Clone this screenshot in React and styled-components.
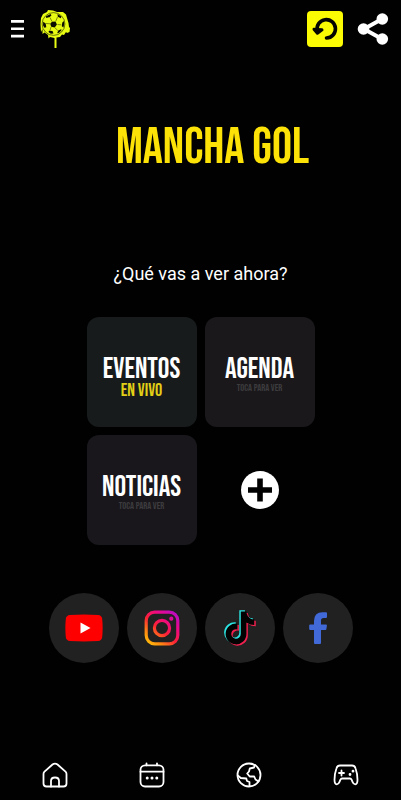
import React from "react";
import styled, { createGlobalStyle } from "styled-components";

const GlobalStyle = createGlobalStyle`
  *, *::before, *::after { box-sizing: border-box; }
  html { height: 100%; }
  body { margin: 0; min-height: 100%; background: #010102; color: #fff; font-family: Roboto, sans-serif; }
  button { padding: 0; border: 0; background: none; color: inherit; font: inherit; cursor: pointer; }
  a { color: inherit; text-decoration: none; }
  svg { display: block; }
`;

const Page = styled.div`
  min-height: 100vh;
  display: flex;
  flex-direction: column;
`;

const Header = styled.header`
  display: flex;
  align-items: center;
  justify-content: space-between;
  height: 58px;
  padding: 0 12px 0 8px;
`;

const HeaderGroup = styled.div`
  display: flex;
  align-items: center;
  gap: ${(p) => p.$gap}px;
`;

const IconButton = styled.button`
  display: grid;
  place-items: center;
`;

const BackButton = styled(IconButton)`
  width: 36px;
  height: 36px;
  border-radius: 4px;
  background: #fbfb03;
  color: #050500;
`;

const Main = styled.main`
  flex: 1;
  display: flex;
  flex-direction: column;
  align-items: center;
`;

const condensed = `
  font-family: "Bebas Neue", "Liberation Sans Narrow", "Roboto Condensed", Roboto, sans-serif;
  font-weight: 400;
`;

const Title = styled.h1`
  ${condensed}
  margin: 66px 0 0;
  padding-left: 24px;
  font-size: 50px;
  line-height: 48px;
  color: #fde208;
  white-space: nowrap;
`;

const Question = styled.p`
  margin: 90px 0 0;
  font-size: 18px;
  line-height: 24px;
`;

const Cards = styled.div`
  display: grid;
  grid-template-columns: repeat(2, 110px);
  grid-auto-rows: 110px;
  gap: 8px;
  margin-top: 31px;
`;

const Card = styled.button`
  ${condensed}
  display: flex;
  flex-direction: column;
  align-items: center;
  padding-top: 40px;
  border-radius: 12px;
  background: ${(p) => p.$background};
`;

const CardName = styled.span`
  font-size: 29px;
  line-height: 26px;
`;

const CardNote = styled.span`
  font-size: ${(p) => (p.$live ? 18 : 10)}px;
  line-height: ${(p) => (p.$live ? 16 : 10)}px;
  color: ${(p) => (p.$live ? "#e2cf16" : "#3d3c3f")};
`;

const Socials = styled.nav`
  display: flex;
  gap: 8px;
  margin-top: 48px;
`;

const SocialLink = styled.a`
  display: grid;
  place-items: center;
  width: 70px;
  height: 70px;
  border-radius: 50%;
  background: #212121;
`;

const TabBar = styled.nav`
  display: grid;
  grid-template-columns: repeat(4, 1fr);
  height: 50px;
  padding: 0 6px;
`;

const Tab = styled.a`
  display: grid;
  place-items: center;
`;

const MenuIcon = () => (
  <svg width="18" height="20" viewBox="0 0 18 20" fill="#fff" aria-hidden="true">
    <path d="M3 1h13v2.700H3zM3 8.400h13v2.700H3zM3 15.700h13v2.700H3z" />
  </svg>
);

const BallLogo = () => (
  <svg width="34" height="40" viewBox="0 0 34 40" aria-hidden="true">
    <path
      fill="#e8fb12"
      d="M3 9 5 5 9 3 10 1 15 1.500 19 3 25 3 28 5.500 29 9 30.500 14 31 18 32 19 31.500 23 29 24 28 23 26 26 24 25.500 22 28 18.500 28.500V39h-2V29L12 28l-1.500 1.500L10 26 6.500 23.500 4.500 25V20L3 23 2.500 15z"
    />
    <circle cx="15.500" cy="15" r="11.400" fill="none" stroke="#161a02" strokeWidth=".6" />
    <g fill="#0b0d02">
      <path d="m14 12.800 3.500-.2 1.400 3-2.200 2.900-3.500-.7-1-3z" />
      <path d="m8 7.300 4.500-2.300 1 1.300-1.700 1.700-3.600 1zM19.500 5l3.800 2.600-.4 1.600-3.100-1.500zM5.200 12.800l2.500 1.700.6 3.700-1.900.6-1.400-2.500zM25.700 12l.6 3-.9 3.500-1.600-1.300.4-3.500zM11 21.800l3.500.3 1 2.500-2.700.2-2.300-1.700zM20.300 21.500l2.800-1.200.5.8-2.500 2.600-2 .6z" />
    </g>
    <path
      fill="none"
      stroke="#3c4204"
      strokeWidth=".6"
      d="m12 8.500 2 4M19.500 8l-1.700 4.200M19.500 15.500l3.800.3M17 18.800l2.800 2.700M13 18l-1 3.500M8 14.500l4 .3"
    />
  </svg>
);

const BackIcon = () => (
  <svg width="28" height="28" viewBox="0 0 28 28" fill="none" stroke="currentColor" aria-hidden="true">
    <path d="M6.200 15.500A9.200 9.200 0 1 1 15.500 23" strokeWidth="3.600" strokeLinecap="round" />
    <path d="m3 14.200 3.400 4L11 14.800z" fill="currentColor" strokeWidth="3" strokeLinejoin="round" />
  </svg>
);

const ShareIcon = () => (
  <svg width="32" height="32" viewBox="0 0 32 32" fill="#fff" aria-hidden="true">
    <path d="M25 6 7 16l18 10" fill="none" stroke="#fff" strokeWidth="4" />
    <circle cx="25.300" cy="6" r="5.800" />
    <circle cx="6.500" cy="16" r="5.800" />
    <circle cx="25.300" cy="26" r="5.800" />
  </svg>
);

const PlusIcon = () => (
  <svg width="38" height="38" viewBox="0 0 38 38" aria-hidden="true">
    <circle cx="19" cy="19" r="19" fill="#fff" />
    <path d="M16.200 7.500h5.600v8.700H31v5.600h-9.200v8.700h-5.600v-8.700H7v-5.600h9.200z" fill="#010102" />
  </svg>
);

const YoutubeIcon = () => (
  <svg width="38" height="28" viewBox="0 0 38 28" aria-hidden="true">
    <path d="M5 1Q19 .2 33 1q3.800.3 4.200 4 .9 9 0 18-.4 3.700-4.200 4-14 .8-28 0-3.800-.3-4.200-4-.9-9 0-18Q1.200 1.300 5 1z" fill="#fe0000" />
    <path d="m15.500 8.500 10 5.500-10 5.500z" fill="#fff" />
  </svg>
);

const InstagramIcon = () => (
  <svg width="36" height="36" viewBox="0 0 36 36" fill="none" aria-hidden="true">
    <defs>
      <linearGradient id="instagram" x1="3" y1="35" x2="31" y2="2" gradientUnits="userSpaceOnUse">
        <stop offset="0" stopColor="#ffc80a" />
        <stop offset=".22" stopColor="#ff8a12" />
        <stop offset=".48" stopColor="#fb2036" />
        <stop offset=".74" stopColor="#ee0889" />
        <stop offset="1" stopColor="#b80cc4" />
      </linearGradient>
    </defs>
    <rect x="2.200" y="2.200" width="31.600" height="31.600" rx="8.500" stroke="url(#instagram)" strokeWidth="3.200" />
    <circle cx="18" cy="18" r="7.600" stroke="url(#instagram)" strokeWidth="3.200" />
    <circle cx="27.300" cy="8.700" r="2.100" fill="url(#instagram)" />
  </svg>
);

const notePath =
  "M448 210a210 210 0 0 1-122.800-39.300v178.700A162.600 162.600 0 1 1 185 188.300v89.900a74.600 74.600 0 1 0 52.200 71.200V0h88a121 121 0 0 0 1.900 22.200A122 122 0 0 0 381 102.400a121 121 0 0 0 67 20.100z";

const TiktokIcon = () => (
  <svg width="32" height="36" viewBox="-25 -25 500 562" aria-hidden="true">
    <path d={notePath} fill="#f0204f" transform="translate(23 20)" />
    <path d={notePath} fill="#2ce5e2" transform="translate(-23 -20)" />
    <path d={notePath} fill="#030303" />
  </svg>
);

const FacebookIcon = () => (
  <svg width="18" height="32" viewBox="0 0 18 32" aria-hidden="true">
    <path
      d="M6 32q-1 0-1-1V18H1.200q-1 0-1-1v-3.500q0-1 1-1H5V9Q5 .5 13.500.3H17q1 0 1 1V5q0 1-1 1h-2.500Q12 6 12 8.500v4h5q1 0 .9 1L17.400 17q-.1 1-1 1H12v13q0 1-1 1z"
      fill="#4169d8"
    />
  </svg>
);

const LineIcon = ({ children }) => (
  <svg width="26" height="26" viewBox="0 0 26 26" fill="none" stroke="#fff" strokeWidth="1.800" strokeLinecap="round" strokeLinejoin="round" aria-hidden="true">
    {children}
  </svg>
);

const HomeIcon = () => (
  <LineIcon>
    <path d="M1.500 12Q1.500 10.500 2.500 9.600L10.500 2.500Q13 .6 15.500 2.500l8 7.100q1 .9 1 2.400v9.500q0 3-3 3h-17q-3 0-3-3z" />
    <path d="M9 24.500V19q0-3.500 4-3.500t4 3.500v5.500" />
  </LineIcon>
);

const CalendarIcon = () => (
  <LineIcon>
    <rect x="1.500" y="3.300" width="23" height="21.200" rx="4.500" />
    <path d="M1.500 9.700h23M7.500 1.300v2M18 1.300v2" />
    <path d="M8.200 16h.01M13 16h.01M17.800 16h.01" strokeWidth="3" />
  </LineIcon>
);

const GlobeIcon = () => (
  <LineIcon>
    <circle cx="13" cy="13" r="11.500" />
    <path d="m18.800 3.200-.8 2.300-4.200 1-.8 3-1.800 2 2.500 3h4.500l1.300 3 3 2M1.800 13.500l3 2.500 5.500.5.700 2.500 2.500 1v4" />
  </LineIcon>
);

const GamepadIcon = () => (
  <LineIcon>
    <path d="M7 3.500h12q2.600 0 3.500 2.700 2 5.500 2 11.500 0 4.400-2.300 4.600-1.700 0-2.700-2.400l-.8-2Q18 16.500 17 16.500H9q-1 0-1.700 1.400l-.8 2q-1 2.400-2.700 2.400-2.300-.2-2.300-4.600 0-6 2-11.500Q4.400 3.500 7 3.500z" />
    <path d="M8.500 8.500v5M6 11h5" />
    <path d="M20 9.200h.01M17 12.500h.01" strokeWidth="2.800" />
  </LineIcon>
);

const socials = [
  ["YouTube", YoutubeIcon],
  ["Instagram", InstagramIcon],
  ["TikTok", TiktokIcon],
  ["Facebook", FacebookIcon],
];

const tabs = [
  ["Inicio", HomeIcon],
  ["Calendario", CalendarIcon],
  ["Mundo", GlobeIcon],
  ["Juegos", GamepadIcon],
];

const cards = [
  { name: "EVENTOS", note: "EN VIVO", live: true, background: "#171b1b" },
  { name: "AGENDA", note: "TOCA PARA VER", background: "#1a181a" },
  { name: "NOTICIAS", note: "TOCA PARA VER", background: "#19171b" },
];

export default function App() {
  return (
    <Page>
      <GlobalStyle />
      <Header>
        <HeaderGroup $gap={12}>
          <IconButton aria-label="Menú"><MenuIcon /></IconButton>
          <BallLogo />
        </HeaderGroup>
        <HeaderGroup $gap={14}>
          <BackButton aria-label="Volver"><BackIcon /></BackButton>
          <IconButton aria-label="Compartir"><ShareIcon /></IconButton>
        </HeaderGroup>
      </Header>
      <Main>
        <Title>MANCHA GOL</Title>
        <Question>¿Qué vas a ver ahora?</Question>
        <Cards>
          {cards.map((card) => (
            <Card key={card.name} $background={card.background}>
              <CardName>{card.name}</CardName>
              <CardNote $live={card.live}>{card.note}</CardNote>
            </Card>
          ))}
          <IconButton aria-label="Más"><PlusIcon /></IconButton>
        </Cards>
        <Socials>
          {socials.map(([name, Icon]) => (
            <SocialLink key={name} href="#" aria-label={name}><Icon /></SocialLink>
          ))}
        </Socials>
      </Main>
      <TabBar>
        {tabs.map(([name, Icon]) => (
          <Tab key={name} href="#" aria-label={name}><Icon /></Tab>
        ))}
      </TabBar>
    </Page>
  );
}
